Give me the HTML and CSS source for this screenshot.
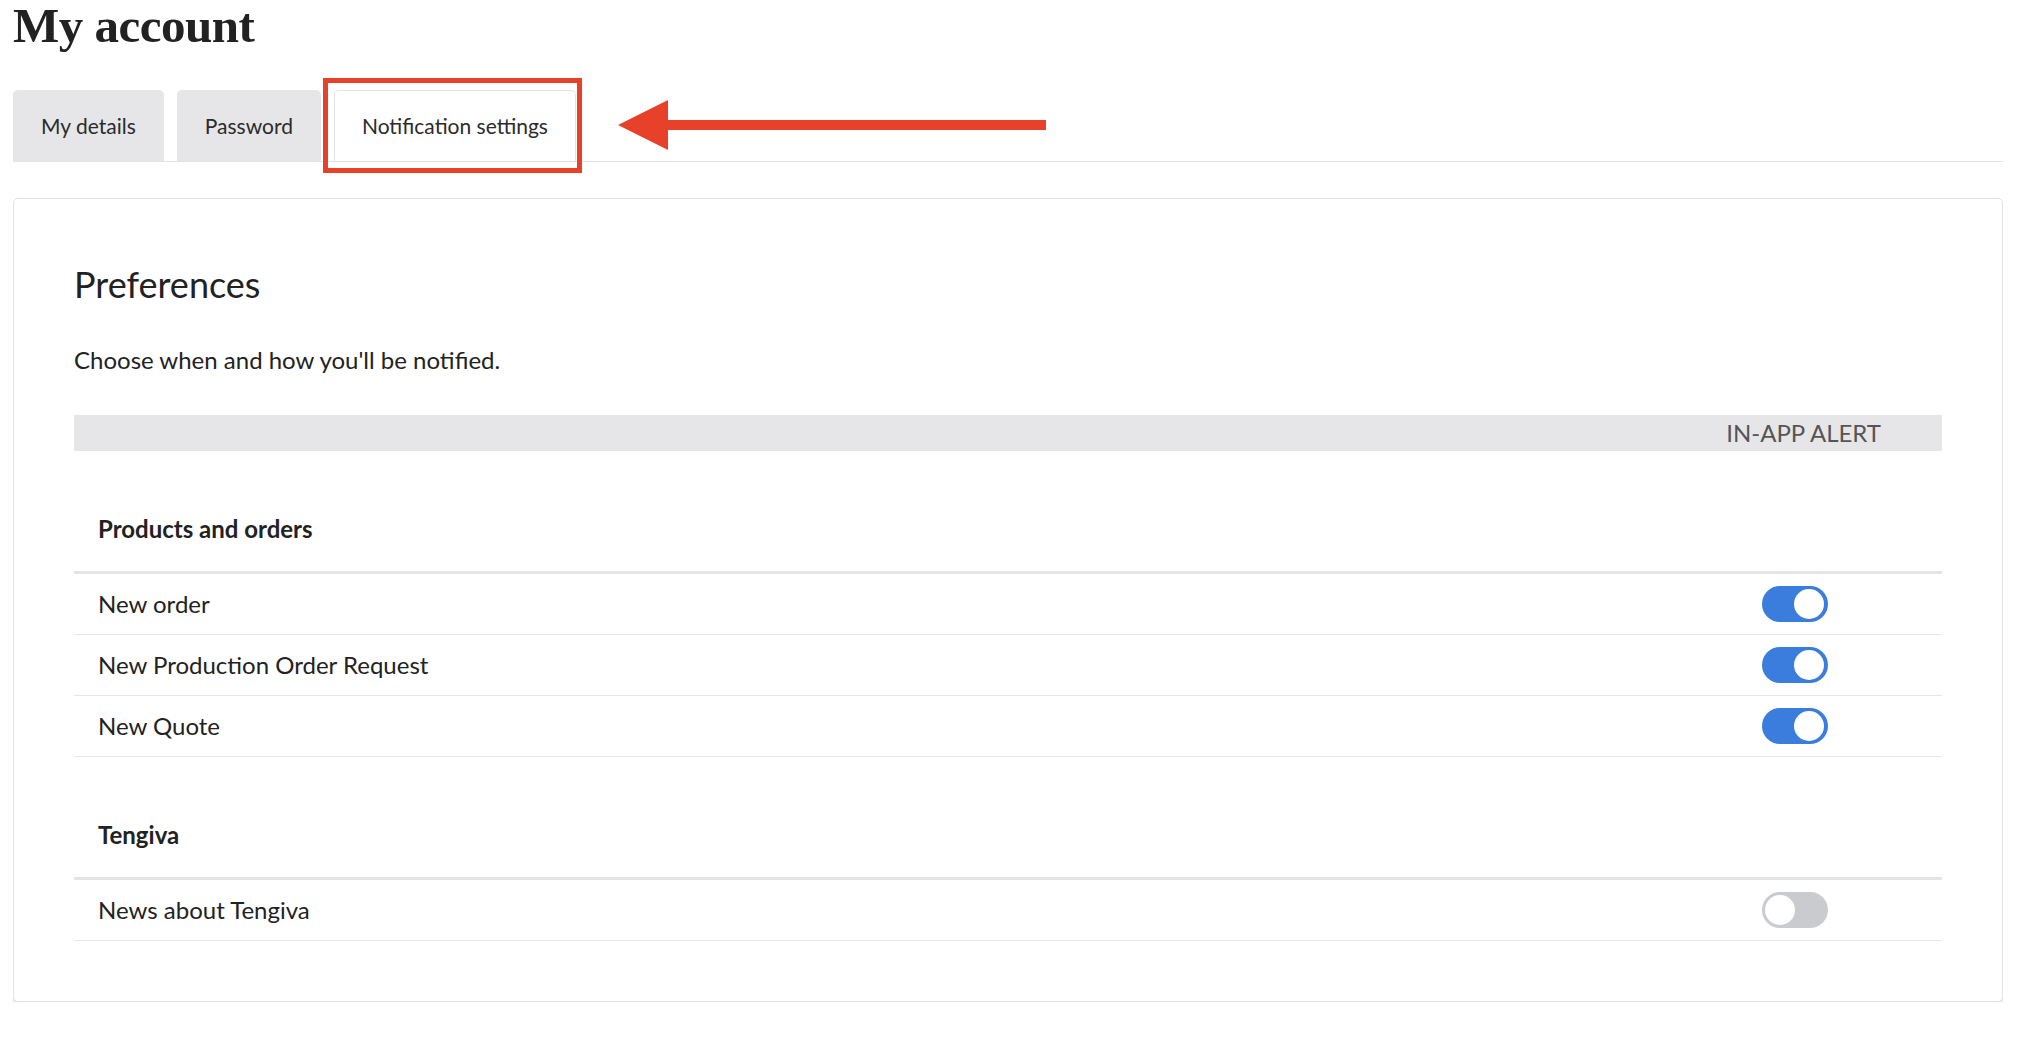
FILE: index.html
```html
<!DOCTYPE html>
<html lang="en">
<head>
<meta charset="utf-8">
<title>My account</title>
<link rel="stylesheet" href="styles.css">
</head>
<body>
<div class="page">
  <h1 class="title">My account</h1>
  <div class="tabs-wrap">
    <nav class="tabs">
      <div class="tab">My details</div>
      <div class="tab">Password</div>
      <div class="tab tab-active">Notification settings</div>
    </nav>
    <div class="highlight"></div>
    <svg class="arrow" width="430" height="50" viewBox="0 0 430 50" aria-hidden="true">
      <polygon points="0,25 50,0 50,50" fill="#e8412a"/>
      <rect x="49" y="20" width="379" height="10" fill="#e8412a"/>
    </svg>
  </div>

  <section class="card">
    <h2 class="card-title">Preferences</h2>
    <p class="card-desc">Choose when and how you'll be notified.</p>
    <div class="col-head">IN-APP ALERT</div>

    <div class="group">
      <div class="group-title">Products and orders</div>
      <div class="row"><span>New order</span><span class="toggle on"><span class="knob"></span></span></div>
      <div class="row"><span>New Production Order Request</span><span class="toggle on"><span class="knob"></span></span></div>
      <div class="row"><span>New Quote</span><span class="toggle on"><span class="knob"></span></span></div>
    </div>

    <div class="group">
      <div class="group-title">Tengiva</div>
      <div class="row"><span>News about Tengiva</span><span class="toggle off"><span class="knob"></span></span></div>
    </div>
  </section>
</div>
</body>
</html>
```

FILE: styles.css
```css
* { box-sizing: border-box; }
html, body { margin: 0; padding: 0; background: #fff; }
body {
  font-family: Lato, "Open Sans", "Liberation Sans", sans-serif;
  color: #222;
}
.page {
  width: 1990px;
  margin-left: 13px;
}
.title {
  margin: 0;
  padding-top: 1px;
  font-family: "Liberation Serif", "DejaVu Serif", serif;
  font-weight: 700;
  font-size: 49px;
  line-height: 49px;
  letter-spacing: -0.5px;
  color: #222;
}
.tabs-wrap {
  position: relative;
  margin-top: 40px;
}
.tabs {
  display: flex;
  gap: 13px;
  border-bottom: 1px solid #e3e3e3;
}
.tab {
  height: 71px;
  line-height: 71px;
  padding: 0 28px;
  font-size: 21px;
  color: #2b2b2b;
  background: #e6e6e8;
  border-radius: 5px 5px 0 0;
}
.tab-active {
  background: #fff;
  border: 1px solid #e3e3e3;
  border-bottom: none;
  line-height: 69px;
  padding: 0 27px;
}
.highlight {
  position: absolute;
  left: 310px;
  top: -12px;
  width: 259px;
  height: 95px;
  border: 5px solid #e8412a;
}
.arrow {
  position: absolute;
  left: 605px;
  top: 10px;
}
.card {
  margin-top: 36px;
  border: 1px solid #e3e3e3;
  border-radius: 5px;
  box-shadow: 0 5px 0 #e4e4e6;
  padding: 65px 60px 60px;
}
.card-title {
  margin: 0;
  font-size: 36px;
  line-height: 40px;
  font-weight: 400;
  color: #222;
}
.card-desc {
  margin: 41px 0 0;
  font-size: 24px;
  line-height: 30px;
}
.col-head {
  margin-top: 40px;
  height: 36px;
  line-height: 36px;
  background: #e6e6e8;
  text-align: right;
  padding-right: 61px;
  font-size: 24px;
  color: #555;
}
.group-title {
  padding: 63px 24px 27px;
  font-size: 24px;
  line-height: 30px;
  font-weight: 700;
  border-bottom: 3px solid #e4e4e4;
}
.row {
  display: flex;
  align-items: center;
  justify-content: space-between;
  height: 61px;
  padding: 0 114px 0 24px;
  border-bottom: 1px solid #e6e6e6;
  font-size: 24px;
  line-height: 30px;
}
.toggle {
  position: relative;
  width: 66px;
  height: 36px;
  border-radius: 18px;
  flex: none;
}
.toggle.on { background: #3b7ddd; }
.toggle.off { background: #cacbcf; }
.knob {
  position: absolute;
  top: 3px;
  width: 30px;
  height: 30px;
  border-radius: 50%;
  background: #fff;
}
.toggle.on .knob { right: 4px; }
.toggle.off .knob { left: 3px; }
```
